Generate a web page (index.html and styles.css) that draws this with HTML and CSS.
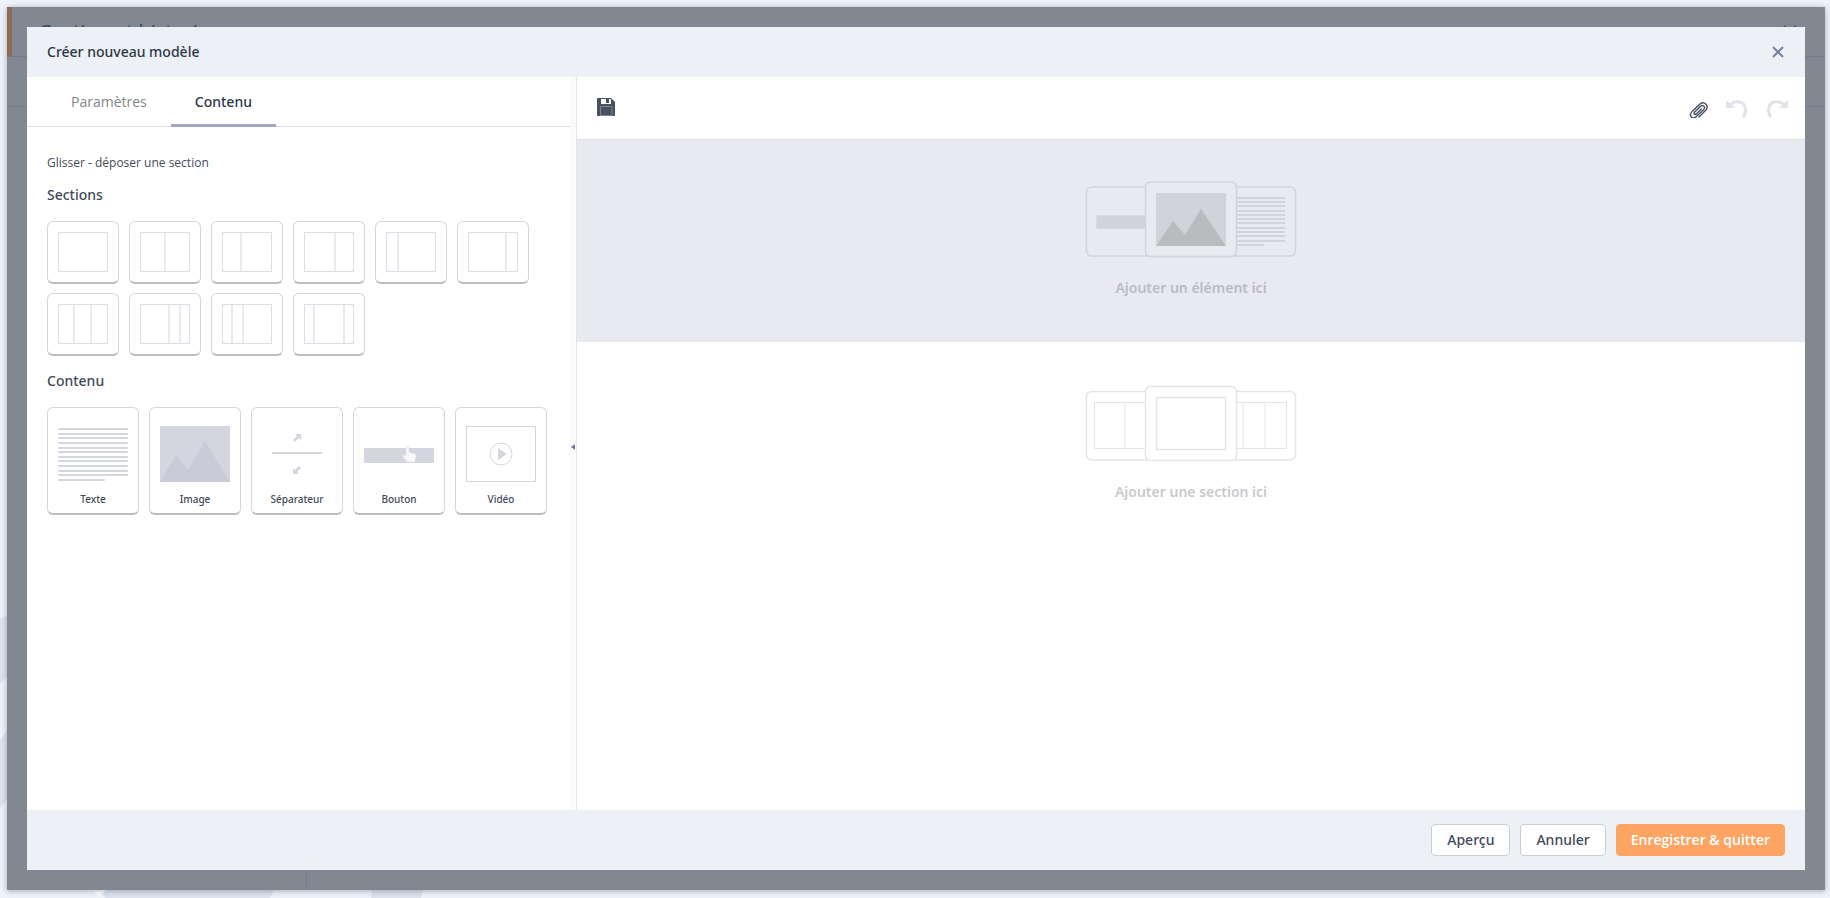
FILE: index.html
```html
<!DOCTYPE html>
<html lang="fr">

<head>
    <meta charset="UTF-8">
    <meta name="viewport" content="width=device-width, initial-scale=1.0">
    <title>Créer nouveau modèle</title>
    <link rel="stylesheet" href="styles.css">
</head>

<body>
    <svg class="backdrop" width="430" height="290" viewBox="0 0 430 290" aria-hidden="true">
        <path fill="#dce3ef" d="M0 11L12 5V66L0 75zM0 132L12 116V186L0 200zM96 275H278L270 290H105zM373 275H425L421 290H371z" />
        <path fill="#fff" d="M85 275H113L99 289z" />
    </svg>

    <div class="window">
        <div class="window-header">
            <h1>Gestion et historique</h1>
            <svg class="window-close" width="14" height="14" viewBox="0 0 14 14"><path d="M1 1L13 13M13 1L1 13" /></svg>
        </div>
        <div class="window-bar"></div>
        <div class="window-body"></div>

        <div class="modal" role="dialog" aria-labelledby="modal-title">
            <header class="modal-header">
                <h2 id="modal-title">Créer nouveau modèle</h2>
                <button class="icon-button close" aria-label="Fermer">
                    <svg width="12" height="12" viewBox="0 0 12 12"><path d="M1 1L11 11M11 1L1 11" /></svg>
                </button>
            </header>

            <div class="modal-body">
                <aside class="sidebar">
                    <nav class="tabs">
                        <button class="tab">Paramètres</button>
                        <button class="tab active">Contenu</button>
                    </nav>
                    <div class="panel">
                        <p class="hint">Glisser - déposer une section</p>
                        <h3>Sections</h3>
                        <div class="cards">
                            <button class="card" aria-label="1 colonne"><svg class="grid-icon" viewBox="0 0 50 40"><rect x=".5" y=".5" width="49" height="39" /></svg></button>
                            <button class="card" aria-label="2 colonnes"><svg class="grid-icon" viewBox="0 0 50 40"><path d="M25 1V39" /><rect x=".5" y=".5" width="49" height="39" /></svg></button>
                            <button class="card" aria-label="1/3 - 2/3"><svg class="grid-icon" viewBox="0 0 50 40"><path d="M19 1V39" /><rect x=".5" y=".5" width="49" height="39" /></svg></button>
                            <button class="card" aria-label="2/3 - 1/3"><svg class="grid-icon" viewBox="0 0 50 40"><path d="M31 1V39" /><rect x=".5" y=".5" width="49" height="39" /></svg></button>
                            <button class="card" aria-label="1/4 - 3/4"><svg class="grid-icon" viewBox="0 0 50 40"><path d="M12 1V39" /><rect x=".5" y=".5" width="49" height="39" /></svg></button>
                            <button class="card" aria-label="3/4 - 1/4"><svg class="grid-icon" viewBox="0 0 50 40"><path d="M38 1V39" /><rect x=".5" y=".5" width="49" height="39" /></svg></button>
                            <button class="card" aria-label="3 colonnes"><svg class="grid-icon" viewBox="0 0 50 40"><path d="M16 1V39M33 1V39" /><rect x=".5" y=".5" width="49" height="39" /></svg></button>
                            <button class="card" aria-label="1/2 - 1/4 - 1/4"><svg class="grid-icon" viewBox="0 0 50 40"><path d="M29 1V39M40 1V39" /><rect x=".5" y=".5" width="49" height="39" /></svg></button>
                            <button class="card" aria-label="1/4 - 1/4 - 1/2"><svg class="grid-icon" viewBox="0 0 50 40"><path d="M10 1V39M21 1V39" /><rect x=".5" y=".5" width="49" height="39" /></svg></button>
                            <button class="card" aria-label="1/4 - 1/2 - 1/4"><svg class="grid-icon" viewBox="0 0 50 40"><path d="M10 1V39M40 1V39" /><rect x=".5" y=".5" width="49" height="39" /></svg></button>
                        </div>
                        <h3>Contenu</h3>
                        <div class="cards">
                            <button class="card content-card">
                                <svg class="content-icon" viewBox="0 0 70 56">
                                    <path stroke="#d3d6df" stroke-width="2" stroke-linecap="round" d="M1 3H69M1 8H69M1 12H69M1 17H69M1 22H69M1 26H69M1 31H69M1 35H69M1 40H69M1 45H69M1 49H69M1 54H46" />
                                </svg>
                                <span>Texte</span>
                            </button>
                            <button class="card content-card">
                                <svg class="content-icon" viewBox="0 0 70 56">
                                    <path fill="#d3d6df" d="M0 0H70V56H0z" />
                                    <path fill="#c9ccd8" d="M0 56L16 29L28 44L45 15L70 56z" />
                                </svg>
                                <span>Image</span>
                            </button>
                            <button class="card content-card">
                                <svg class="content-icon" viewBox="0 0 70 56">
                                    <path stroke="#d3d6df" stroke-width="2" stroke-linecap="round" d="M11 27H59" />
                                    <path fill="#d3d6df" d="M33 8H39V14L37 12L33 16L31 14L35 10zM31 48V42L33 44L37 40L39 42L35 46L37 48z" />
                                </svg>
                                <span>Séparateur</span>
                            </button>
                            <button class="card content-card">
                                <svg class="content-icon" viewBox="0 0 70 56">
                                    <rect y="22" width="70" height="15" rx="1" fill="#d3d6df" />
                                    <path fill="#f7f7f8" stroke="#e4e4e6" stroke-width=".6" d="M42 21Q43.500 19 45 21V26L51 28Q52.500 28.500 52 31L50.500 36H43.500L39 31Q38.500 29 40 29L42 30z" />
                                </svg>
                                <span>Bouton</span>
                            </button>
                            <button class="card content-card">
                                <svg class="content-icon" viewBox="0 0 70 56">
                                    <g fill="none" stroke="#d3d6df"><path d="M.5 .5H69.500V55.500H.5z" /><circle cx="35" cy="28" r="11" /></g>
                                    <path fill="#d3d6df" d="M32 22L41 28L32 34z" />
                                </svg>
                                <span>Vidéo</span>
                            </button>
                        </div>
                    </div>
                </aside>
                <button class="handle" aria-label="Replier le panneau">
                    <svg width="4" height="6" viewBox="0 0 4 6"><path fill="#6f7a92" d="M4 0V6L0 3z" /></svg>
                </button>

                <main class="editor">
                    <div class="toolbar">
                        <button class="icon-button" aria-label="Enregistrer">
                            <svg width="18" height="18" viewBox="0 0 18 18">
                                <path fill="#46505f" d="M1 0H14L18 4V17Q18 18 17 18H1Q0 18 0 17V1Q0 0 1 0z" />
                                <path fill="#fff" d="M4 1H14V6H4z" />
                                <path fill="#46505f" d="M9 1H12V5H9z" />
                                <path fill="none" stroke="#7e8792" d="M3.500 17.500V8.500H15V17.500z" />
                            </svg>
                        </button>
                        <div class="tools">
                            <button class="icon-button" aria-label="Joindre un fichier">
                                <svg width="20" height="18" viewBox="0 0 20 18">
                                    <path fill="none" stroke="#46505f" stroke-width="1.400" stroke-linecap="round" d="M11 17L17.700 10.200C21.500 6 16.500 .5 12 4L4 11.600C0 16 5 20 8.400 16.500L15.700 9.500C17.800 6.800 14.800 4.200 12.500 6.300L6.700 12C5.200 13.800 6.700 15.300 8.300 13.900L13.200 9" />
                                </svg>
                            </button>
                            <button class="icon-button" aria-label="Annuler l'action" disabled>
                                <svg width="22" height="18" viewBox="0 0 22 18">
                                    <path fill="none" stroke="#dfe3e8" stroke-width="3" d="M3 6C8-.5 19 0 19.500 10Q19.500 14.500 17 17" />
                                    <path fill="#dfe3e8" d="M0 0V8H9z" />
                                </svg>
                            </button>
                            <button class="icon-button" aria-label="Rétablir l'action" disabled>
                                <svg width="22" height="18" viewBox="0 0 22 18">
                                    <path fill="none" stroke="#dfe3e8" stroke-width="3" d="M19 6C14-.5 3 0 2.500 10Q2.500 14.500 5 17" />
                                    <path fill="#dfe3e8" d="M22 0V8H13z" />
                                </svg>
                            </button>
                        </div>
                    </div>

                    <section class="drop-zone filled">
                        <svg width="212" height="78" viewBox="0 0 212 78">
                            <g fill="#e9eaef" stroke="#d2d3d8" stroke-width="1.500">
                                <rect x="1.500" y="6" width="209" height="69" rx="5" />
                                <rect x="12" y="35" width="60" height="12" rx="1" fill="#d2d3d8" />
                                <path stroke-width="2" d="M150 17H200M150 21H200M150 25H200M150 30H200M150 34H200M150 38H200M150 42H200M150 47H200M150 51H200M150 55H200M150 60H200M150 64H179" />
                                <rect x="60.500" y="1" width="91" height="74.500" rx="5" />
                            </g>
                            <path fill="#d2d3d8" d="M71 12H141V65H71z" />
                            <path fill="#babbbf" d="M71 65L88 40L100 54L116 28L141 65z" />
                        </svg>
                        <p>Ajouter un élément ici</p>
                    </section>

                    <section class="drop-zone">
                        <svg width="212" height="78" viewBox="0 0 212 78">
                            <g fill="#fff" stroke="#e5e5e5" stroke-width="1.500">
                                <rect x="1.500" y="6.500" width="209" height="68.500" rx="5" />
                                <rect x="9.500" y="17.500" width="192" height="46" stroke-width="1" />
                                <path stroke="#f0f0f0" d="M40 18V63M158 18V63M180 18V63" />
                                <rect x="60.500" y="1.500" width="91" height="74" rx="5" />
                                <rect x="71.500" y="12.500" width="69" height="52" />
                            </g>
                        </svg>
                        <p>Ajouter une section ici</p>
                    </section>
                </main>
            </div>

            <footer class="modal-footer">
                <button class="button">Aperçu</button>
                <button class="button">Annuler</button>
                <button class="button primary">Enregistrer &amp; quitter</button>
            </footer>
        </div>
    </div>
</body>

</html>
```

FILE: styles.css
```css
* {
    box-sizing: border-box;
}

body {
    margin: 0;
    height: 100vh;
    padding: 7px 5px 8px 7px;
    overflow: hidden;
    background: #eef2fa;
    font-family: 'Open Sans', 'Noto Sans', sans-serif;
    font-size: 14px;
    line-height: 20px;
    color: #3f4a5a;
}

h1,
h2,
h3,
p {
    margin: 0;
    font-weight: 500;
}

button {
    margin: 0;
    padding: 0;
    border: none;
    background: none;
    font: inherit;
    color: inherit;
    cursor: pointer;
}

svg {
    display: block;
}

.backdrop {
    position: absolute;
    left: 0;
    bottom: 0;
}

/* window behind the dialog */
.window {
    position: relative;
    display: flex;
    flex-direction: column;
    height: 100%;
    background: #828891;
    box-shadow: 0 1px 6px rgba(0, 0, 0, 0.3);
}

.window-header {
    display: flex;
    justify-content: space-between;
    align-items: center;
    height: 50px;
    padding: 0 28px 0 26px;
    border-left: 5px solid #8a6a58;
    border-bottom: 1px solid #777d88;
}

.window-header h1 {
    font-size: 20px;
    line-height: 24px;
    color: #3b4660;
}

.window-close {
    fill: none;
    stroke: #4a556d;
    stroke-width: 2;
}

.window-bar {
    height: 50px;
    border-bottom: 1px solid #777d88;
}

.window-body {
    flex: 1;
    width: 300px;
    border-right: 1px solid #777d88;
}

/* dialog */
.modal {
    position: absolute;
    inset: 20px;
    display: flex;
    flex-direction: column;
    background: #fff;
}

.modal-header {
    display: flex;
    justify-content: space-between;
    align-items: center;
    height: 50px;
    padding: 0 21px 0 20px;
    background: #edf1f6;
}

.modal-header h2,
.panel h3,
.tab.active,
.button {
    font-family: 'Noto Sans', 'Open Sans', sans-serif;
    font-size: 14px;
    font-weight: 500;
}

.modal-header h2 {
    color: #2c3848;
}

.close svg {
    stroke: #76819a;
    stroke-width: 2;
}

.modal-body {
    display: flex;
    flex: 1;
    min-height: 0;
}

.sidebar {
    width: 543px;
}

.tabs {
    display: flex;
    height: 50px;
    padding-left: 20px;
    border-bottom: 1px solid #dddee7;
}

.tab {
    height: 50px;
    padding: 2px 24px 0;
    border-bottom: 3px solid transparent;
    color: #7f8785;
}

.tab.active {
    border-bottom-color: #a0a7c1;
    color: #2c3848;
}

.panel {
    padding: 26px 20px;
}

.hint {
    font-size: 12px;
    font-weight: 400;
}

.panel h3 {
    margin: 12px 0 16px;
}

.cards + h3 {
    margin-top: 15px;
}

.cards {
    display: flex;
    flex-wrap: wrap;
    gap: 9px 10px;
}

.card {
    display: flex;
    flex-direction: column;
    align-items: center;
    width: 72px;
    height: 63px;
    padding-top: 10px;
    border: 1px solid #d5d6df;
    border-bottom: 2px solid #bcbdc3;
    border-radius: 6px;
    background: #fff;
}

.grid-icon {
    width: 50px;
    height: 40px;
    fill: none;
    stroke: #dcdde5;
}

.grid-icon path {
    stroke: #e9e9f0;
    stroke-width: 2;
}

.content-card {
    width: 92px;
    height: 108px;
    padding-top: 18px;
    gap: 7px;
    font-family: 'Noto Sans', 'Open Sans', sans-serif;
    font-size: 10px;
    font-weight: 500;
}

.content-icon {
    width: 70px;
    height: 56px;
}

.handle {
    display: flex;
    align-items: center;
    justify-content: center;
    width: 6px;
    padding-top: 7px;
    background: #fafafb;
}

.editor {
    flex: 1;
    border-left: 1px solid #e3e5ec;
}

.toolbar {
    display: flex;
    justify-content: space-between;
    height: 63px;
    padding: 21px 17px 0 20px;
    border-bottom: 1px solid #dddfe4;
}

.toolbar .icon-button {
    height: 18px;
}

.tools {
    display: flex;
    gap: 18px;
    padding-top: 2px;
}

.drop-zone {
    display: flex;
    flex-direction: column;
    align-items: center;
    gap: 19px;
    padding: 43px 0;
    color: #c9cacc;
}

.drop-zone.filled {
    padding: 41px 0 44px;
    background: #e9eaef;
    color: #b9bbc1;
}

.drop-zone p {
    font-family: 'Noto Sans', 'Open Sans', sans-serif;
    font-weight: 600;
}

.modal-footer {
    display: flex;
    justify-content: flex-end;
    align-items: center;
    gap: 10px;
    height: 60px;
    padding: 0 20px;
    background: #edf1f6;
}

.button {
    height: 32px;
    padding: 0 15px;
    border: 1px solid #c9cdd9;
    border-radius: 4px;
    background: #fff;
}

.button.primary {
    padding: 0 14px;
    border-color: #fda463;
    background: #fda463;
    color: #fff;
    font-family: 'Open Sans', 'Noto Sans', sans-serif;
    font-weight: 600;
}
```
